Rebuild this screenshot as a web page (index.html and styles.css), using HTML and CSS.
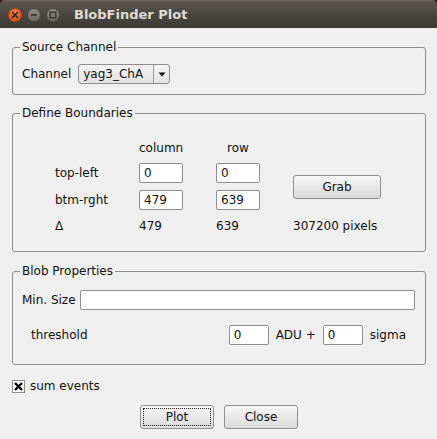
FILE: index.html
```html
<!DOCTYPE html>
<html>
<head>
<meta charset="utf-8">
<title>BlobFinder Plot</title>
<link rel="stylesheet" href="styles.css">
</head>
<body>
<div class="window">
  <div class="titlewrap">
    <div class="titlebar">
      <div class="wbtns">
        <span class="wbtn close"><svg width="8" height="8" viewBox="0 0 8 8"><path d="M1.6 1.6L6.4 6.4M6.4 1.6L1.6 6.4" stroke="#3b2a22" stroke-width="1.6" stroke-linecap="round"/></svg></span>
        <span class="wbtn min"><svg width="8" height="8" viewBox="0 0 8 8"><path d="M1 4H7" stroke="#3a3935" stroke-width="1.8"/></svg></span>
        <span class="wbtn max"><svg width="8" height="8" viewBox="0 0 8 8"><rect x="1.2" y="1.2" width="5.6" height="5.6" fill="none" stroke="#3a3935" stroke-width="1.5"/></svg></span>
      </div>
      <div class="title">BlobFinder Plot</div>
    </div>
  </div>

  <div class="content">
    <fieldset class="group">
      <legend>Source Channel</legend>
      <div class="source-row">
        <span>Channel</span>
        <div class="combo">
          <span class="combo-text">yag3_ChA</span>
          <span class="combo-arrow"><svg width="8" height="5" viewBox="0 0 8 5"><path d="M0.5 0.5H7.5L4 4.5Z" fill="#111"/></svg></span>
        </div>
      </div>
    </fieldset>

    <fieldset class="group bounds">
      <legend>Define Boundaries</legend>
      <div class="bgrid">
        <span></span>
        <span class="hdr">column</span>
        <span class="hdr">row</span>
        <span></span>

        <span class="lbl">top-left</span>
        <div class="entry">0</div>
        <div class="entry">0</div>
        <button class="btn grab">Grab</button>

        <span class="lbl">btm-rght</span>
        <div class="entry">479</div>
        <div class="entry">639</div>

        <span class="lbl">&Delta;</span>
        <span class="lbl">479</span>
        <span class="lbl">639</span>
        <span class="lbl">307200 pixels</span>
      </div>
    </fieldset>

    <fieldset class="group blob">
      <legend>Blob Properties</legend>
      <div class="minsize-row">
        <span>Min. Size</span>
        <div class="entry wide"></div>
      </div>
      <div class="thresh-row">
        <span class="thresh-label">threshold</span>
        <div class="thresh-ctrls">
          <div class="entry small">0</div>
          <span>ADU +</span>
          <div class="entry small">0</div>
          <span>sigma</span>
        </div>
      </div>
    </fieldset>

    <div class="check-row">
      <span class="checkbox"><svg width="9" height="9" viewBox="0 0 9 9"><path d="M1 1L8 8M8 1L1 8" stroke="#000" stroke-width="2.4"/></svg></span>
      <span>sum events</span>
    </div>

    <div class="actions">
      <button class="btn act focus"><span class="focus-ring">Plot</span></button>
      <button class="btn act">Close</button>
    </div>
  </div>
</div>
</body>
</html>
```

FILE: styles.css
```css
html, body {
  margin: 0;
  padding: 0;
}

body {
  background: #efefef;
  font-family: "DejaVu Sans", "Liberation Sans", sans-serif;
  font-size: 12px;
  line-height: 14px;
  color: #111;
}

.window {
  width: 437px;
  height: 439px;
  overflow: hidden;
}

.titlewrap {
  background: #3a1717;
}

.titlebar {
  height: 28px;
  box-sizing: border-box;
  display: flex;
  align-items: center;
  padding-left: 8px;
  background: linear-gradient(#5b5750, #4a4741 50%, #3d3b36);
  border-top: 1px solid #6a665e;
  border-radius: 5px 5px 0 0;
}

.wbtns {
  display: flex;
  gap: 5px;
  padding-top: 1px;
}

.wbtn {
  width: 14px;
  height: 14px;
  box-sizing: border-box;
  border-radius: 50%;
  display: flex;
  align-items: center;
  justify-content: center;
}

.wbtn.close {
  background: radial-gradient(circle at 50% 35%, #f68a5c, #e2531d 70%);
  border: 1px solid #b8461b;
}

.wbtn.min,
.wbtn.max {
  background: linear-gradient(#8d8a84, #6e6b65);
  border: 1px solid #4c4a45;
}

.title {
  margin-left: 14px;
  font-weight: bold;
  font-size: 13px;
  color: #dfdbd2;
  padding-top: 1px;
}

.content {
  padding-top: 12px;
}

.group {
  border: 1px solid #8e8e8e;
  border-radius: 3px;
  margin: 0 11px 0 12px;
  padding: 0 10px 10px 9px;
  min-width: 0;
}

.group legend {
  padding: 0 2px;
  margin-left: -2px;
  line-height: 14px;
}

.source-row {
  margin-top: 10px;
  display: flex;
  align-items: center;
  gap: 7px;
}

.combo {
  width: 92px;
  height: 20px;
  box-sizing: border-box;
  border: 1px solid #8e8e8e;
  border-radius: 3px;
  background: linear-gradient(#f4f4f4, #e2e2e2);
  display: flex;
}

.combo-text {
  flex: 1;
  padding-left: 4px;
  line-height: 18px;
}

.combo-arrow {
  width: 15px;
  border-left: 1px solid #9a9a9a;
  display: flex;
  align-items: center;
  justify-content: center;
}

.bounds {
  margin-top: 11px;
  padding-bottom: 17px;
}

.bgrid {
  margin-top: 19px;
  margin-left: 33px;
  display: grid;
  grid-template-columns: 51px 44px 44px 88px;
  grid-template-rows: 17px 20px 20px 17px;
  column-gap: 33px;
  row-gap: 7px;
  align-items: center;
}

.hdr {
  text-align: center;
}

.lbl {
  white-space: nowrap;
}

.entry {
  height: 20px;
  box-sizing: border-box;
  border: 1px solid #8e8e8e;
  border-radius: 2px;
  background: #fff;
  padding-left: 4px;
  line-height: 18px;
}

.btn {
  font-family: inherit;
  font-size: 12px;
  color: #111;
  border: 1px solid #8f8f8f;
  border-radius: 3px;
  background: linear-gradient(#f6f6f6, #dadada);
  padding: 0;
  height: 24px;
  box-sizing: border-box;
}

.grab {
  grid-column: 4;
  grid-row: 2 / 4;
  width: 88px;
  align-self: center;
}

.blob {
  margin-top: 12px;
  padding-bottom: 19px;
}

.minsize-row {
  margin-top: 12px;
  display: flex;
  align-items: center;
  gap: 4px;
}

.entry.wide {
  flex: 1;
}

.thresh-row {
  margin-top: 15px;
  display: flex;
  align-items: center;
}

.thresh-label {
  margin-left: 9px;
}

.thresh-ctrls {
  margin-left: auto;
  margin-right: 9px;
  display: flex;
  align-items: center;
  gap: 7px;
}

.entry.small {
  width: 40px;
}

.check-row {
  margin: 14px 0 0 12px;
  display: flex;
  align-items: center;
  gap: 5px;
}

.checkbox {
  width: 13px;
  height: 13px;
  box-sizing: border-box;
  border: 1px solid #8e8e8e;
  background: #fff;
  display: flex;
  align-items: center;
  justify-content: center;
}

.actions {
  margin-top: 12px;
  display: flex;
  justify-content: center;
  gap: 10px;
  padding-left: 1px;
}

.act {
  width: 74px;
}

.act.focus {
  padding: 2px;
}

.focus-ring {
  display: block;
  height: 100%;
  box-sizing: border-box;
  border: 1px dotted #222;
  line-height: 16px;
}
```
